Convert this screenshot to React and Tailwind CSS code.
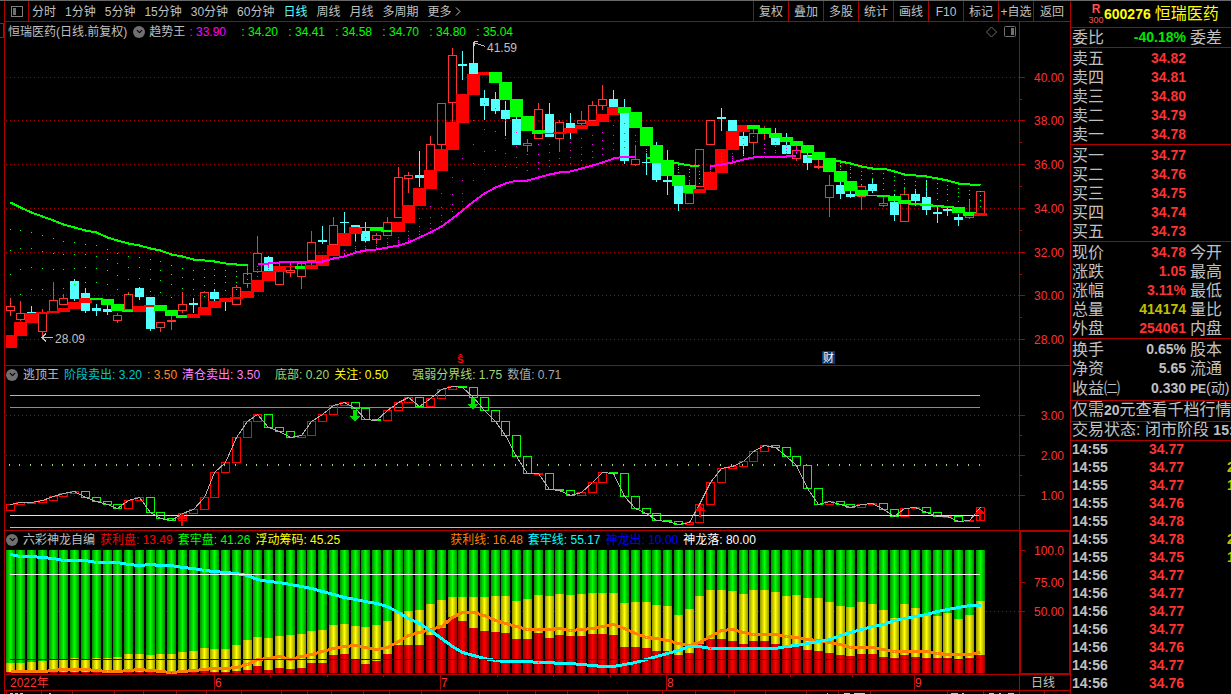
import React from 'react';
import { ChevronDown } from 'lucide-react';

const RED = '#ff3232';
const BORDER = '#b00000';
const CYAN = '#54ffff';

const barX = (i) => Math.floor(10.05 + i * 10.78);

// kind, high, low, body top, body bottom
const candles = [
  ['r', 298, 316, 306, 311], ['r', 301, 321, 313, 320], ['c', 306, 313, 312, 313], ['r', 309, 336, 313, 332],
  ['r', 282, 312, 300, 312], ['r', 294, 305, 298, 305], ['c', 279, 301, 281, 299], ['c', 288, 313, 293, 311],
  ['c', 304, 316, 308, 311], ['c', 305, 315, 309, 312], ['r', 313, 323, 315, 321], ['r', 292, 310, 294, 310],
  ['c', 287, 300, 288, 297], ['c', 297, 331, 297, 329], ['r', 322, 332, 322, 328], ['r', 315, 330, 320, 322],
  ['r', 292, 313, 304, 311], ['c', 298, 313, 303, 305], ['r', 291, 308, 292, 308], ['c', 289, 301, 292, 299],
  ['c', 298, 311, 300, 302], ['r', 285, 305, 287, 305], ['r', 265, 288, 273, 284], ['r', 236, 272, 253, 272],
  ['c', 256, 271, 257, 271], ['r', 263, 285, 266, 285], ['r', 262, 277, 270, 273], ['r', 262, 289, 263, 277],
  ['r', 231, 262, 242, 261], ['c', 226, 244, 240, 242], ['r', 217, 245, 225, 245], ['c', 212, 233, 222, 223],
  ['c', 225, 242, 225, 227], ['c', 222, 242, 231, 241], ['r', 233, 244, 235, 240], ['r', 217, 236, 222, 236],
  ['r', 167, 218, 177, 218], ['r', 172, 193, 175, 179], ['c', 151, 187, 175, 178], ['r', 136, 175, 144, 175],
  ['r', 103, 149, 103, 145], ['r', 48, 122, 55, 103], ['c', 51, 80, 64, 66], ['c', 42, 74, 63, 74],
  ['c', 90, 120, 98, 106], ['c', 92, 114, 99, 111], ['c', 101, 136, 110, 119], ['c', 117, 145, 119, 145],
  ['r', 139, 152, 143, 146], ['r', 103, 139, 109, 139], ['c', 103, 137, 114, 137], ['r', 120, 152, 122, 139],
  ['c', 113, 139, 123, 128], ['r', 111, 125, 120, 124], ['r', 101, 121, 105, 121], ['r', 85, 110, 99, 106],
  ['c', 90, 107, 99, 107], ['c', 99, 164, 113, 161], ['r', 145, 166, 159, 165], ['c', 154, 175, 162, 163],
  ['c', 142, 182, 163, 180], ['c', 150, 195, 180, 182], ['c', 184, 211, 186, 204], ['r', 182, 204, 193, 204],
  ['r', 149, 187, 149, 187], ['r', 120, 145, 120, 145], ['c', 108, 131, 117, 119], ['c', 120, 131, 120, 131],
  ['c', 132, 156, 136, 146], ['r', 129, 155, 133, 143], ['r', 126, 140, 129, 132], ['c', 128, 145, 137, 145],
  ['c', 133, 154, 145, 154], ['r', 146, 161, 150, 159], ['c', 153, 170, 155, 163], ['r', 160, 169, 166, 168],
  ['r', 175, 217, 185, 198], ['c', 182, 199, 185, 194], ['c', 191, 198, 194, 197], ['r', 184, 210, 186, 197],
  ['c', 179, 193, 184, 191], ['r', 197, 207, 203, 206], ['c', 194, 221, 202, 215], ['r', 187, 222, 194, 222],
  ['c', 189, 206, 194, 201], ['c', 180, 215, 197, 210], ['c', 207, 223, 212, 214], ['c', 206, 216, 209, 211],
  ['c', 214, 226, 217, 220], ['r', 200, 219, 215, 218], ['r', 191, 213, 191, 214],
];

// trend band: kind, top, bottom
const bands = [
  ['r', 335, 348], ['r', 322, 336], ['r', 313, 323], ['r', 312, 314], ['r', 311, 313], ['r', 308, 312],
  ['r', 302, 309], ['r', 298, 303], ['g', 298, 300], ['g', 299, 305], ['g', 304, 311], ['g', 310, 312],
  ['r', 306, 312], ['r', 305, 307], ['g', 305, 311], ['g', 310, 316], ['g', 315, 318], ['r', 314, 318],
  ['r', 307, 315], ['r', 301, 308], ['r', 298, 302], ['r', 297, 299], ['r', 291, 298], ['r', 280, 292],
  ['r', 271, 281], ['r', 266, 272], ['r', 266, 267], ['g', 266, 269], ['r', 265, 269], ['r', 255, 266],
  ['r', 245, 256], ['r', 233, 246], ['r', 227, 234], ['g', 227, 228], ['g', 227, 231], ['g', 230, 232],
  ['r', 222, 232], ['r', 205, 223], ['r', 188, 206], ['r', 170, 189], ['r', 149, 171], ['r', 122, 150],
  ['r', 94, 123], ['r', 74, 95], ['r', 72, 75], ['g', 72, 83], ['g', 82, 100], ['g', 99, 117],
  ['g', 116, 131], ['g', 130, 134], ['r', 133, 134], ['r', 132, 134], ['r', 128, 133], ['r', 125, 129],
  ['r', 121, 126], ['r', 114, 122], ['r', 107, 115], ['g', 107, 113], ['g', 112, 128], ['g', 127, 146],
  ['g', 145, 163], ['g', 160, 176], ['g', 175, 186], ['g', 185, 193], ['r', 189, 193], ['r', 172, 190],
  ['r', 149, 173], ['r', 131, 150], ['r', 125, 132], ['g', 125, 129], ['g', 128, 134], ['g', 133, 138],
  ['g', 137, 142], ['g', 141, 146], ['g', 145, 153], ['g', 152, 160], ['g', 158, 172], ['g', 171, 182],
  ['g', 181, 191], ['g', 190, 196], ['g', 195, 196], ['g', 195, 197], ['g', 196, 201], ['g', 200, 204],
  ['g', 203, 205], ['g', 204, 206], ['g', 205, 207], ['g', 206, 208], ['g', 207, 213], ['g', 212, 216],
  ['r', 213, 216],
];

// long average, drawn green while falling and magenta while rising
const averages = [
  { color: '#00ff00', from: 0, ys: [202, 207, 212, 216, 220, 224, 227, 230, 232, 237, 240, 243, 245, 248, 250, 254, 256, 259, 260, 261, 263, 264, 264] },
  { color: '#ff00ff', from: 23, ys: [263, 263, 262, 261, 261, 261, 261, 258, 256, 252, 250, 249, 247, 245, 242, 237, 232, 226, 218, 210, 201, 193, 187, 183, 180, 180, 177, 174, 172, 171, 168, 165, 162, 158, 156, 156] },
  { color: '#00ff00', from: 59, ys: [157, 159, 161, 163, 165, 166] },
  { color: '#ff00ff', from: 65, ys: [166, 164, 162, 159, 157, 156, 156, 156, 155] },
  { color: '#00ff00', from: 74, ys: [156, 158, 159, 161, 163, 166, 168, 168, 171, 174, 175, 176, 178, 180, 183, 184, 185] },
];

const escape = [
  504, 502, 502, 500, 496, 493, 491, 497, 501, 504, 508, 500, 497, 512, 518, 520, 513, 509, 497, 472, 462, 437, 421,
  414, 427, 431, 437, 435, 421, 414, 405, 402, 408, 419, 420, 410, 402, 397, 406, 398, 389, 386, 387, 397, 410, 421,
  435, 456, 473, 473, 489, 490, 495, 492, 482, 472, 473, 496, 508, 513, 520, 521, 524, 522, 504, 482, 468, 466, 461,
  451, 445, 447, 456, 465, 488, 504, 501, 504, 507, 504, 503, 509, 516, 508, 507, 512, 516, 516, 521, 520, 507,
];

// dragon panel readings are kept in thirds of a pixel below y = 525
const level = (v) => Math.round(525 + v / 3);
const floating = [
  414, 414, 411, 408, 403, 404, 399, 404, 399, 399, 396, 387, 387, 390, 387, 387, 381, 378, 369, 372, 372, 360, 345,
  336, 339, 333, 330, 327, 318, 315, 300, 297, 303, 306, 300, 288, 262, 258, 255, 237, 225, 216, 216, 216, 216, 213,
  213, 228, 222, 210, 213, 207, 210, 207, 204, 204, 204, 234, 231, 231, 240, 243, 270, 252, 213, 195, 195, 198, 207,
  195, 195, 201, 213, 210, 219, 219, 231, 243, 246, 231, 237, 255, 279, 237, 249, 267, 273, 264, 282, 270, 228,
];
const profit = [
  441, 441, 441, 441, 441, 441, 441, 441, 441, 441, 441, 437, 441, 441, 441, 441, 441, 441, 438, 441, 441, 438, 435,
  423, 435, 429, 432, 429, 414, 414, 390, 387, 402, 417, 407, 387, 360, 360, 360, 330, 309, 276, 288, 309, 318, 321,
  324, 342, 342, 324, 339, 330, 333, 333, 327, 327, 330, 366, 366, 369, 378, 378, 390, 384, 357, 342, 342, 348, 357,
  348, 348, 357, 366, 363, 375, 378, 384, 390, 393, 387, 387, 396, 399, 390, 396, 399, 399, 399, 403, 399, 390,
];
const trapLine = [
  88, 93, 94, 95, 98, 104, 106, 106, 110, 112, 112, 116, 121, 118, 121, 121, 125, 128, 134, 137, 140, 144, 151, 161,
  167, 172, 176, 182, 190, 197, 207, 217, 223, 227, 233, 242, 260, 278, 293, 315, 340, 362, 380, 391, 400, 405, 409,
  409, 409, 412, 412, 415, 415, 416, 419, 422, 424, 418, 410, 403, 394, 384, 374, 364, 364, 368, 370, 370, 370, 370,
  370, 370, 364, 360, 355, 349, 341, 331, 320, 312, 304, 297, 286, 279, 273, 268, 259, 253, 247, 241, 241,
];
const profitLine = [
  437, 437, 437, 437, 434, 431, 431, 431, 434, 437, 437, 434, 431, 434, 437, 440, 437, 436, 431, 430, 430, 427, 418,
  401, 398, 394, 402, 394, 387, 377, 368, 362, 361, 367, 371, 367, 348, 330, 320, 312, 302, 277, 260, 260, 271, 285,
  294, 304, 313, 313, 313, 310, 316, 313, 308, 302, 298, 310, 324, 336, 340, 345, 355, 361, 352, 333, 316, 313, 322,
  328, 328, 328, 334, 337, 341, 346, 352, 358, 367, 367, 367, 371, 377, 377, 377, 377, 383, 386, 386, 386, 382,
];

const periods = ['分时', '1分钟', '5分钟', '15分钟', '30分钟', '60分钟', '日线', '周线', '月线', '多周期', '更多'];
const tools = ['复权', '叠加', '多股', '统计', '画线', 'F10', '标记', '+自选', '返回'];

const asks = [['卖五', '34.82'], ['卖四', '34.81'], ['卖三', '34.80'], ['卖二', '34.79'], ['卖一', '34.78']];
const bids = [['买一', '34.77'], ['买二', '34.76'], ['买三', '34.75'], ['买四', '34.74'], ['买五', '34.73']];
const quotes = [
  ['现价', '34.78', '今开'],
  ['涨跌', '1.05', '最高'],
  ['涨幅', '3.11%', '最低'],
  ['总量', '414174', '量比', 'text-[#c0c000]'],
  ['外盘', '254061', '内盘'],
];
const fundamentals = [
  ['换手', '0.65%', '股本', 'text-[#c0c0c0]'],
  ['净资', '5.65', '流通', 'text-[#c0c0c0]'],
  ['收益㈡', '0.330', 'PE(动)', 'text-[#c0c0c0]'],
];
const trades = [
  ['14:55', '34.77'], ['14:55', '34.77', '2'], ['14:55', '34.77', '1'], ['14:55', '34.76'], ['14:55', '34.78'],
  ['14:55', '34.78', '2'], ['14:55', '34.75', '1'], ['14:56', '34.77'], ['14:56', '34.77'], ['14:56', '34.77'],
  ['14:56', '34.77'], ['14:56', '34.76'], ['14:56', '34.77'], ['14:56', '34.76'],
];

const points = (ys, from = 0) => ys.map((y, i) => `${barX(from + i) + 0.5},${y + 0.5}`).join(' ');

function Grid({ ys }) {
  return ys.map((y) => (
    <line key={y} x1="6" x2="1019" y1={y + 0.5} y2={y + 0.5} stroke={BORDER} strokeDasharray="1 3" />
  ));
}

function Candle({ i, data: [kind, high, low, top, bottom] }) {
  const x = barX(i);
  const color = kind === 'r' ? RED : CYAN;
  const height = bottom - top;
  return (
    <g>
      {high < top && <rect x={x} y={high} width="1" height={top - high} fill={color} />}
      {low > bottom && <rect x={x} y={bottom} width="1" height={low - bottom} fill={color} />}
      {kind === 'r' && height > 2 ? (
        <rect x={x - 3.5} y={top + 0.5} width="8" height={height - 1} fill="none" stroke={color} />
      ) : (
        <rect x={x - 4} y={top} width="9" height={Math.max(height, 1)} fill={color} />
      )}
    </g>
  );
}

function TrendDots() {
  return averages.flatMap(({ color, from, ys }) =>
    ys.flatMap((y, k) => {
      const i = from + k;
      const end = y > bands[i][2] ? bands[i][2] : bands[i][1];
      const steps = i > 28 && i < 43 ? [0.1, 0.2, 0.35, 0.6] : [0.2, 0.36, 0.54, 0.76];
      return steps.map((s) => (
        <rect key={`${i}-${s}`} x={barX(i)} y={Math.round(y + (end - y) * s)} width="1" height="1" fill={color} />
      ));
    })
  );
}

function PriceChart() {
  return (
    <svg className="block h-[324px] w-full" viewBox="5 41 1014 324" preserveAspectRatio="none" shapeRendering="crispEdges">
      <Grid ys={[77, 120, 164, 208, 252, 295, 339]} />
      {candles.map((c, i) => <Candle key={i} i={i} data={c} />)}
      {bands.map(([kind, top, bottom], i) => (
        <rect
          key={i}
          x={Math.max(barX(i) - 6, 6)}
          y={top}
          width={i === 0 ? 11 : 13}
          height={bottom - top}
          fill={kind === 'r' ? '#ff0000' : '#00ff00'}
        />
      ))}
      <TrendDots />
      {averages.map(({ color, from, ys }) => (
        <polyline key={from} points={points(ys, from)} fill="none" stroke={color} strokeWidth="2" />
      ))}
      <g fill="none" stroke="#c0c0c0">
        <path d="M485 46.5L474 42.5M478 41.5H474V46" />
        <path d="M53 337.5H42M46 333.5L42 337.5L46 341.5" />
      </g>
      <g fill="#c0c0c0" fontSize="12">
        <text x="487" y="52">41.59</text>
        <text x="55" y="343">28.09</text>
      </g>
      <text x="457" y="363" fill="#ff0000" fontSize="12" fontWeight="bold">ŝ</text>
      <rect x="822" y="351" width="13" height="13" fill="#003c78" />
      <text x="823" y="362" fill="#ffffff" fontSize="11">财</text>
    </svg>
  );
}

function EscapeChart() {
  return (
    <svg className="block h-[147px] w-full" viewBox="5 383 1014 147" preserveAspectRatio="none" shapeRendering="crispEdges">
      <Grid ys={[415, 455, 495]} />
      <rect x="10" y="395" width="970" height="1" fill="#ff80ff" />
      <rect x="10" y="407" width="970" height="1" fill="#00c8c8" />
      {escape.map((y, i) => {
        const prev = i === 0 ? 510 : escape[i - 1];
        return (
          <g key={i}>
            <rect x={barX(i) - 1} y="464" width="1" height="2" fill="#a0d878" />
            <rect
              x={barX(i) - 3.5}
              y={Math.min(y, prev) + 0.5}
              width="8"
              height={Math.max(Math.abs(y - prev), 0.5)}
              fill="none"
              stroke={y > prev ? '#00ff00' : '#ff0000'}
            />
          </g>
        );
      })}
      <rect x="10" y="515" width="970" height="1" fill="#ffff00" />
      <rect x="10" y="527" width="970" height="1" fill="#a0d878" />
      <polyline points={points(escape)} fill="none" stroke="#b0b0b0" />
      <g fill="#00e000">
        <path d="M353 410H357V416H360L355 422L350 416H353Z" />
        <path d="M471 398H475V404H478L473 410L468 404H471Z" />
      </g>
      <g fill="#ff0000">
        <path d="M181 526H183V519H187L182 513L177 519H181Z" />
        <path d="M699 517H701V511H705L700 505L695 511H699Z" />
        <path d="M979 520H981V514H985L980 508L975 514H979Z" />
      </g>
    </svg>
  );
}

function DragonChart() {
  const gradients = [['green', '#008c00', '#00ff00'], ['yellow', '#969600', '#ffff00'], ['red', '#960000', '#ff0000']];
  return (
    <svg className="block h-[126px] w-full" viewBox="5 548 1014 126" preserveAspectRatio="none" shapeRendering="crispEdges">
      <defs>
        {gradients.map(([id, edge, mid]) => (
          <linearGradient key={id} id={id}>
            <stop offset="0" stopColor={edge} />
            <stop offset="0.5" stopColor={mid} />
            <stop offset="1" stopColor={edge} />
          </linearGradient>
        ))}
      </defs>
      <Grid ys={[611]} />
      {floating.map((v, i) => {
        const x = barX(i) - 4;
        const mid = level(v);
        const low = level(profit[i]);
        return (
          <g key={i}>
            <rect x={x} y="550" width="9" height={mid - 550} fill="url(#green)" />
            <rect x={x} y={mid} width="9" height={low - mid} fill="url(#yellow)" />
            <rect x={x} y={low} width="9" height={673 - low} fill="url(#red)" />
          </g>
        );
      })}
      <polyline points={points(profitLine.map(level))} fill="none" stroke="#ff8000" strokeWidth="3" />
      <polyline points={points(trapLine.map(level))} fill="none" stroke="#00ffff" strokeWidth="3" />
      <rect x="10" y="659" width="970" height="1" fill="#0000ff" />
      <rect x="10" y="574" width="970" height="1" fill="#ffffff" />
    </svg>
  );
}

function Axis({ y, height, labels, minor, className }) {
  return (
    <div className={className}>
      <svg className="block w-full" height={height} viewBox={`1020 ${y} 50 ${height}`} shapeRendering="crispEdges">
        {labels.map(([label, at]) => (
          <g key={label}>
            <rect x="1020" y={at} width="5" height="1" fill={BORDER} />
            <text x="1064" y={at + 5} textAnchor="end" fontSize="12" fill={RED}>{label}</text>
          </g>
        ))}
        {minor.map((at) => <rect key={at} x="1020" y={at} width="2" height="1" fill={BORDER} />)}
      </svg>
    </div>
  );
}

function Collapse({ label }) {
  return (
    <button type="button" aria-label={label} className="flex h-3 w-3 shrink-0 items-center justify-center rounded-full bg-[#707070] text-black">
      <ChevronDown size={9} strokeWidth={3} />
    </button>
  );
}

function Book({ rows }) {
  return (
    <table className="w-full table-fixed border-collapse">
      <tbody>
        {rows.map(([label, value, next, color = 'text-[#ff3232]']) => (
          <tr key={label} className="h-[19px]">
            <th scope="row" className="w-[50px] p-0 pl-px text-left text-base leading-[19px] font-normal whitespace-nowrap">{label}</th>
            <td className={`w-[65px] p-0 text-right text-sm leading-[19px] font-bold ${color}`}>{value}</td>
            <td className="p-0 pl-1 text-base leading-[19px] whitespace-nowrap">
              {next && next.startsWith('PE') ? <><b className="text-xs">PE</b><span className="text-sm">(动)</span></> : next}
            </td>
          </tr>
        ))}
      </tbody>
    </table>
  );
}

function QuotePanel() {
  return (
    <aside className="w-[161px] shrink-0 overflow-hidden border-l border-[#b00000]">
      <header className="flex h-[27px] items-center border-b border-[#b00000] text-[#ffff00]">
        <div className="ml-[17px] flex w-4 flex-col items-center leading-[10px] text-[#ff5050]">
          <b className="text-xs leading-[11px]">R</b>
          <span className="text-[9px]">300</span>
        </div>
        <b className="text-sm">600276</b>
        <h1 className="ml-1 text-base whitespace-nowrap">恒瑞医药</h1>
      </header>
      <div className="border-b border-[#b00000]">
        <Book rows={[['委比', '-40.18%', '委差', 'text-[#00e600]']]} />
      </div>
      <div className="border-b border-[#b00000] pt-px"><Book rows={asks} /></div>
      <div className="border-b border-[#b00000] pt-px"><Book rows={bids} /></div>
      <div className="border-b border-[#b00000] pt-px"><Book rows={quotes} /></div>
      <div className="border-b border-[#b00000] pt-px pb-0.5"><Book rows={fundamentals} /></div>
      <p className="h-[21px] border-b border-[#b00000] pl-px text-base leading-[18px] whitespace-nowrap">
        仅需<b className="text-sm leading-none">20</b>元查看千档行情
      </p>
      <p className="h-[19px] border-b border-[#b00000] pl-px text-base leading-4 whitespace-nowrap">
        交易状态: 闭市阶段 <b className="text-sm leading-none">15:</b>
      </p>
      <table className="w-full table-fixed border-collapse text-sm font-bold">
        <tbody>
          {trades.map(([time, price, volume], i) => (
            <tr key={i} className="h-[18px] leading-4">
              <td className="w-[77px] p-0 pl-px align-top">{time}</td>
              <td className="w-[79px] p-0 pl-px align-top text-[#ff3232]">{price}</td>
              <td className="p-0 align-top text-[#c0c000]">{volume}</td>
            </tr>
          ))}
        </tbody>
      </table>
    </aside>
  );
}

function Toolbar() {
  return (
    <nav className="flex h-[21px] items-stretch border-b border-[#b00000]">
      <button type="button" aria-label="侧栏" className="flex w-6 items-center justify-center border-r border-[#b00000]">
        <svg width="12" height="11" viewBox="0 0 12 11" shapeRendering="crispEdges">
          <rect x="0.5" y="0.5" width="11" height="10" fill="none" stroke="#808080" />
          <rect x="2" y="2" width="3" height="7" fill="#707070" />
        </svg>
      </button>
      <div className="flex items-center gap-[9px] pt-px pl-[3px]">
        {periods.map((p) => (
          <button key={p} type="button" className={p === '日线' ? 'text-[#54ffff]' : ''}>{p}</button>
        ))}
        <svg className="-ml-1.5" width="6" height="9" viewBox="0 0 6 9" fill="none" stroke="#c0c0c0">
          <path d="M1 0.5L5 4.5L1 8.5" />
        </svg>
      </div>
      <div className="ml-auto flex">
        {tools.map((t) => (
          <button key={t} type="button" className="w-[35px] border-l border-[#b00000] pt-px text-center whitespace-nowrap last:w-[37px]">{t}</button>
        ))}
      </div>
    </nav>
  );
}

function DateAxis() {
  const months = [['6', 214], ['7', 440], ['8', 666], ['9', 914]];
  return (
    <div className="flex h-4 border-b border-[#b00000]">
      <svg className="block h-[15px] min-w-0 flex-1" viewBox="5 675 1014 15" preserveAspectRatio="none" shapeRendering="crispEdges">
        {months.map(([label, x]) => (
          <g key={label}>
            <rect x={x} y="675" width="1" height="15" fill={BORDER} />
            <text x={x + 1} y="687" fontSize="12" fill={RED}>{label}</text>
          </g>
        ))}
        {[270, 327, 383, 497, 553, 610, 728, 790, 852].map((x) => (
          <rect key={x} x={x} y="675" width="1" height="2" fill={BORDER} />
        ))}
        <text x="10" y="687" fontSize="12" fill={RED}>2022年</text>
      </svg>
      <div className="w-[51px] border-l border-[#b00000] pr-1 text-center leading-4">日线</div>
    </div>
  );
}

function TabStrip() {
  const edges = [
    6, 41, 72, 114, 143, 176, 206, 241, 281, 307, 331, 363, 389, 421, 479, 507, 535, 567, 598, 627, 662, 695, 734,
    765, 806, 838, 870, 947, 983, 1019, 1044,
  ];
  return (
    <svg className="block h-[3px] w-full" viewBox="5 691 1065 3" preserveAspectRatio="none" shapeRendering="crispEdges">
      {edges.map((x) => <rect key={x} x={x} y="691" width="1" height="3" fill={BORDER} />)}
      <path d="M10 693.5H13M15 693.5H18M20 693.5H23M49 693.5H51M827 693.5H828M951 693.5H958M962 693.5H964M989 693.5H994M999 693.5H1001M1008 693.5H1014" stroke="#c0c0c0" />
      <path d="M844 693.5H850M854 693.5H865" stroke={CYAN} />
    </svg>
  );
}

export default function App() {
  return (
    <div className="flex w-full overflow-hidden border-t border-[#686868] bg-black font-['Liberation_Sans','Noto_Sans_CJK_SC',sans-serif] text-xs leading-4 text-[#c0c0c0]">
      <div className="w-1 shrink-0 pt-[22px]">
        <div className="h-[15px] w-1 border-y border-r border-[#404040]" />
      </div>
      <main className="min-w-0 flex-1 border-l border-[#b00000]">
        <Toolbar />

        <section className="flex border-b border-[#b00000]">
          <div className="min-w-0 flex-1">
            <div className="flex h-[19px] items-center pl-[3px] whitespace-nowrap">
              <span className="mr-1.5">恒瑞医药(日线.前复权)</span>
              <Collapse label="收起趋势王" />
              <span className="ml-1 w-10">趋势王</span>
              <span className="w-[52px] text-[#ff00ff]">: 33.90</span>
              {['34.20', '34.41', '34.58', '34.70', '34.80', '35.04'].map((v) => (
                <span key={v} className="w-[47px] text-[#00ff00]">: {v}</span>
              ))}
              <svg className="mr-[3px] ml-auto" width="30" height="12" viewBox="0 0 30 12" fill="none" stroke="#707070">
                <path d="M5.5 1L10.5 6L5.5 11L0.5 6Z" />
                <rect x="18.5" y="0.5" width="11" height="10" rx="1" />
                <rect x="25" y="2" width="3" height="7" fill="#707070" stroke="none" />
              </svg>
            </div>
            <PriceChart />
          </div>
          <Axis
            className="w-[51px] border-l border-[#b00000]"
            y={22}
            height={343}
            labels={[['40.00', 77], ['38.00', 120], ['36.00', 164], ['34.00', 208], ['32.00', 252], ['30.00', 295], ['28.00', 339]]}
            minor={[99, 142, 186, 230, 274, 317]}
          />
        </section>

        <section className="flex border-b border-[#b00000]">
          <div className="min-w-0 flex-1">
            <div className="flex h-[17px] items-center gap-[5px] pl-px whitespace-nowrap">
              <Collapse label="收起逃顶王" />
              <span>逃顶王</span>
              <span className="text-[#00c8c8]">阶段卖出: 3.20</span>
              <span className="text-[#ff8c1e]">: 3.50</span>
              <span className="text-[#ff80ff]">清仓卖出: 3.50</span>
              <span className="ml-2.5 text-[#a0d878]">底部: 0.20</span>
              <span className="text-[#ffff00]">关注: 0.50</span>
              <span className="ml-[19px] text-[#a0d878]">强弱分界线: 1.75</span>
              <span className="text-[#a8a8a8]">数值: 0.71</span>
            </div>
            <EscapeChart />
          </div>
          <Axis
            className="w-[51px] border-l border-[#b00000]"
            y={366}
            height={164}
            labels={[['3.00', 415], ['2.00', 455], ['1.00', 495]]}
            minor={[435, 475]}
          />
        </section>

        <section className="flex border-b border-[#b00000]">
          <div className="min-w-0 flex-1">
            <div className="flex h-[17px] items-center gap-[5px] pl-px whitespace-nowrap">
              <Collapse label="收起六彩神龙自编" />
              <span>六彩神龙自编</span>
              <span className="text-[#ff0000]">获利盘: 13.49</span>
              <span className="text-[#00ff00]">套牢盘: 41.26</span>
              <span className="text-[#ffff00]">浮动筹码: 45.25</span>
              <span className="ml-[105px] text-[#ff8000]">获利线: 16.48</span>
              <span className="text-[#00ffff]">套牢线: 55.17</span>
              <span className="text-[#0000ff]">神龙出: 10.00</span>
              <span className="text-white">神龙落: 80.00</span>
            </div>
            <DragonChart />
          </div>
          <Axis
            className="w-[51px] border-l border-[#b00000] ring-1 ring-[#b00000] ring-inset"
            y={531}
            height={143}
            labels={[['100.0', 550], ['75.00', 582], ['50.00', 611]]}
            minor={[]}
          />
        </section>

        <DateAxis />
        <TabStrip />
      </main>
      <QuotePanel />
    </div>
  );
}
